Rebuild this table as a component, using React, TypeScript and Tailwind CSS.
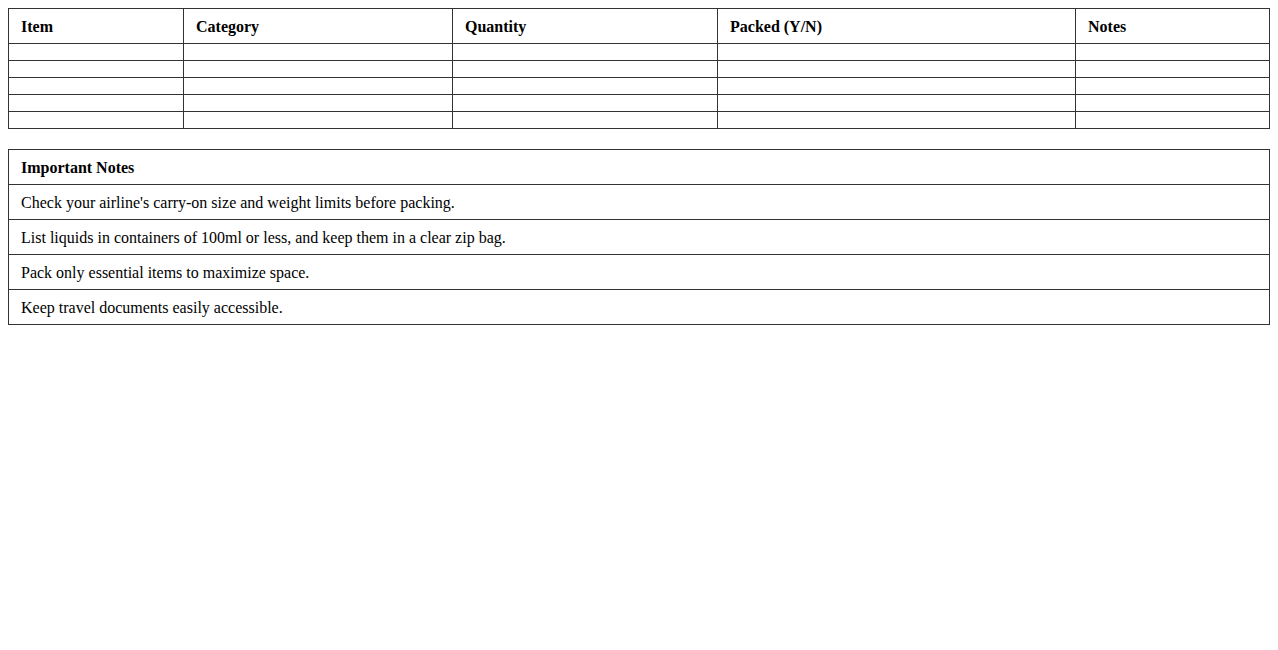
import React from 'react';

const columns = [
  { label: 'Item', width: 'w-[175px]' },
  { label: 'Category', width: 'w-[269px]' },
  { label: 'Quantity', width: 'w-[265px]' },
  { label: 'Packed (Y/N)', width: 'w-[358px]' },
  { label: 'Notes', width: '' },
];

const notes = [
  "Check your airline's carry-on size and weight limits before packing.",
  'List liquids in containers of 100ml or less, and keep them in a clear zip bag.',
  'Pack only essential items to maximize space.',
  'Keep travel documents easily accessible.',
];

const cell = 'border border-[#333] px-3 text-left';
const textCell = `${cell} pt-[9px] pb-[7px] leading-[18px]`;

const App: React.FC = () => {
  return (
    <div className="min-h-screen bg-white p-2 text-[16px] text-black font-['Liberation_Serif','Times_New_Roman',serif]">
      <table className="w-full table-fixed border-collapse">
        <colgroup>
          {columns.map((c) => (
            <col key={c.label} className={c.width} />
          ))}
        </colgroup>
        <thead>
          <tr>
            {columns.map((c) => (
              <th key={c.label} className={`${textCell} font-bold`}>
                {c.label}
              </th>
            ))}
          </tr>
        </thead>
        <tbody>
          {[0, 1, 2, 3, 4].map((r) => (
            <tr key={r}>
              {columns.map((c) => (
                <td key={c.label} className={`${cell} h-[17px] p-0 leading-[0]`}></td>
              ))}
            </tr>
          ))}
        </tbody>
      </table>

      <table className="mt-5 w-full border-collapse">
        <thead>
          <tr>
            <th className={`${textCell} font-bold`}>Important Notes</th>
          </tr>
        </thead>
        <tbody>
          {notes.map((n) => (
            <tr key={n}>
              <td className={textCell}>{n}</td>
            </tr>
          ))}
        </tbody>
      </table>
    </div>
  );
};

export default App;
